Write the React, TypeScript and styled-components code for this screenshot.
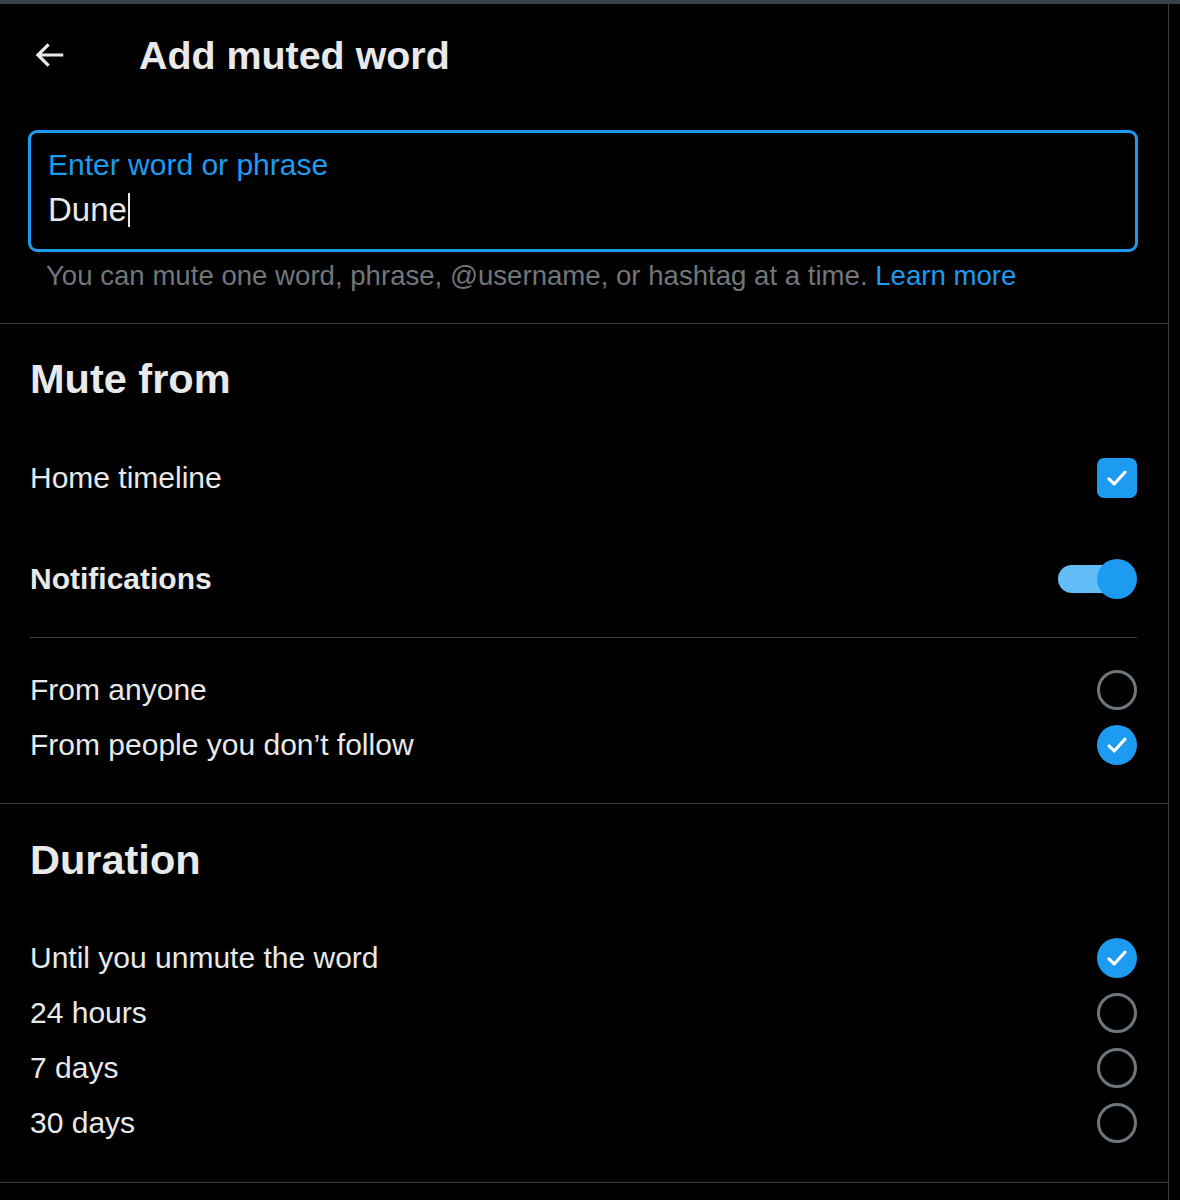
import React from "react";
import styled, { createGlobalStyle } from "styled-components";

const Global = createGlobalStyle`
  html, body { margin: 0; padding: 0; background: #000; }
  body { font-family: "Liberation Sans", Arial, sans-serif; color: #e7e9ea; }
  * { box-sizing: border-box; }
`;

const Page = styled.div`
  width: 1180px;
  min-height: 1200px;
  background: #000;
  display: flex;
  flex-direction: column;
`;

const TopStrip = styled.div`
  height: 4px;
  background: #3a404a;
`;

const Column = styled.main`
  width: 1169px;
  border-right: 1px solid #3a3d40;
  min-height: 1196px;
  display: flex;
  flex-direction: column;
`;

const Header = styled.header`
  height: 102px;
  display: flex;
  align-items: center;
  padding-left: 30px;
`;

const BackButton = styled.button`
  width: 38px;
  height: 38px;
  padding: 0;
  border: 0;
  background: transparent;
  color: #e7e9ea;
  display: flex;
  align-items: center;
  justify-content: center;
  margin-right: 71px;
  svg { width: 38px; height: 38px; display: block; }
`;

const Title = styled.h1`
  margin: 0;
  font-size: 39.4px;
  font-weight: 700;
  line-height: 48px;
  color: #e7e9ea;
`;

const InputBlock = styled.div`
  padding: 24px 30px 29px 28px;
  border-bottom: 1px solid #3a3d40;
`;

const Field = styled.div`
  border: 3px solid #1d9bf0;
  border-radius: 9px;
  padding: 15px 17px 19px;
  display: flex;
  flex-direction: column;
  gap: 8px;
`;

const FieldLabel = styled.div`
  font-size: 30px;
  line-height: 34px;
  color: #1d9bf0;
`;

const FieldValue = styled.div`
  font-size: 33px;
  line-height: 40px;
  color: #e7e9ea;
  display: flex;
  align-items: center;
`;

const Caret = styled.span`
  display: inline-block;
  width: 2px;
  height: 34px;
  background: #e7e9ea;
  margin-left: 1px;
`;

const Helper = styled.p`
  margin: 6px 0 0 18px;
  font-size: 27.6px;
  line-height: 36px;
  color: #71767b;
`;

const Link = styled.a`
  color: #1d9bf0;
  text-decoration: none;
`;

const Section = styled.section<{ $top: number; $bottom: number }>`
  padding: ${(p) => p.$top}px 31px ${(p) => p.$bottom}px 30px;
  border-bottom: 1px solid #3a3d40;
  display: flex;
  flex-direction: column;
`;

const SectionTitle = styled.h2<{ $after: number }>`
  margin: 0 0 ${(p) => p.$after}px;
  font-size: 41.5px;
  line-height: 56px;
  font-weight: 700;
  color: #e7e9ea;
`;

const Row = styled.div<{ $h: number }>`
  height: ${(p) => p.$h}px;
  display: flex;
  align-items: center;
  justify-content: space-between;
`;

const RowLabel = styled.span<{ $bold?: boolean }>`
  font-size: 30px;
  line-height: 36px;
  font-weight: ${(p) => (p.$bold ? 700 : 400)};
  color: #e7e9ea;
`;

const InnerDivider = styled.div`
  height: 1px;
  background: #3a3d40;
  margin: 8px 0 24px;
`;

const Spacer = styled.div<{ $h: number }>`
  height: ${(p) => p.$h}px;
`;

const CheckBox = styled.span`
  width: 40px;
  height: 40px;
  border-radius: 7px;
  background: #1d9bf0;
  display: flex;
  align-items: center;
  justify-content: center;
  svg { width: 32px; height: 32px; display: block; }
`;

const Toggle = styled.span`
  position: relative;
  width: 79px;
  height: 40px;
  display: flex;
  align-items: center;
`;

const Track = styled.span`
  width: 62px;
  height: 28px;
  border-radius: 14px;
  background: #63bef7;
`;

const Thumb = styled.span`
  position: absolute;
  right: 0;
  top: 0;
  width: 40px;
  height: 40px;
  border-radius: 50%;
  background: #1d9bf0;
`;

const Radio = styled.span<{ $on?: boolean }>`
  width: 40px;
  height: 40px;
  border-radius: 50%;
  border: ${(p) => (p.$on ? "0" : "3px solid #6e767d")};
  background: ${(p) => (p.$on ? "#1d9bf0" : "transparent")};
  display: flex;
  align-items: center;
  justify-content: center;
  svg { width: 32px; height: 32px; display: block; }
`;

const Check = () => (
  <svg viewBox="0 0 24 24" fill="none">
    <path d="M6 12.6l3.9 3.9L18 7.6" stroke="#fff" strokeWidth="2.3" strokeLinecap="round" strokeLinejoin="round" />
  </svg>
);

const BackArrow = () => (
  <svg viewBox="0 0 24 24" fill="currentColor">
    <path d="M7.414 13l5.043 5.04-1.414 1.42L3.586 12l7.457-7.46 1.414 1.42L7.414 11H21v2H7.414z" />
  </svg>
);

const durations = [
  { label: "Until you unmute the word", on: true },
  { label: "24 hours", on: false },
  { label: "7 days", on: false },
  { label: "30 days", on: false },
];

export default function App() {
  return (
    <Page>
      <Global />
      <TopStrip />
      <Column>
        <Header>
          <BackButton aria-label="Back">
            <BackArrow />
          </BackButton>
          <Title>Add muted word</Title>
        </Header>

        <InputBlock>
          <Field>
            <FieldLabel>Enter word or phrase</FieldLabel>
            <FieldValue>
              Dune
              <Caret />
            </FieldValue>
          </Field>
          <Helper>
            You can mute one word, phrase, @username, or hashtag at a time. <Link href="#">Learn more</Link>
          </Helper>
        </InputBlock>

        <Section $top={27} $bottom={0}>
          <SectionTitle $after={20}>Mute from</SectionTitle>
          <Row $h={101}>
            <RowLabel>Home timeline</RowLabel>
            <CheckBox>
              <Check />
            </CheckBox>
          </Row>
          <Row $h={101}>
            <RowLabel $bold>Notifications</RowLabel>
            <Toggle>
              <Track />
              <Thumb />
            </Toggle>
          </Row>
          <InnerDivider />
          <Row $h={55}>
            <RowLabel>From anyone</RowLabel>
            <Radio />
          </Row>
          <Row $h={55}>
            <RowLabel>From people you don’t follow</RowLabel>
            <Radio $on>
              <Check />
            </Radio>
          </Row>
          <Spacer $h={31} />
        </Section>

        <Section $top={28} $bottom={32}>
          <SectionTitle $after={42}>Duration</SectionTitle>
          {durations.map((d) => (
            <Row $h={55} key={d.label}>
              <RowLabel>{d.label}</RowLabel>
              <Radio $on={d.on}>{d.on && <Check />}</Radio>
            </Row>
          ))}
        </Section>
      </Column>
    </Page>
  );
}
